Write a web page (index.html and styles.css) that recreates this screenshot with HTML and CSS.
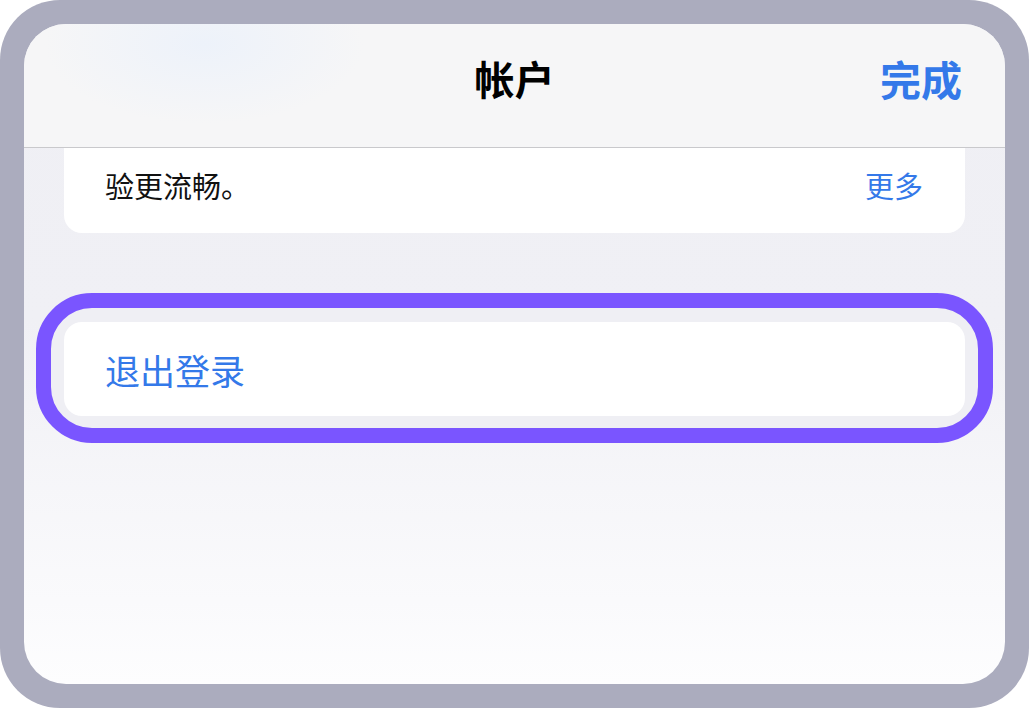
FILE: index.html
```html
<!DOCTYPE html>
<html>
  <head>
    <meta charset="UTF-8">
    <title>帐户</title>
    <link rel="stylesheet" href="styles.css">
  </head>
  <body>
    <div class="device">
      <div class="screen">
        <div class="header">
          <span></span>
          <h1 class="title">帐户</h1>
          <a class="done" href="#">完成</a>
        </div>
        <div class="content">
          <div class="card card-cut">
            <p class="card-text">验更流畅。</p>
            <a class="more" href="#">更多</a>
          </div>
          <div class="highlight">
            <div class="card card-logout">
              <a class="logout" href="#">退出登录</a>
            </div>
          </div>
        </div>
      </div>
    </div>
  </body>
</html>
```

FILE: styles.css
```css
body {
  margin: 0;
  background-color: #ffffff;
  font-family: "Noto Sans CJK SC", "Noto Sans", sans-serif;
}

a {
  text-decoration: none;
}

.device {
  width: 1029px;
  height: 708px;
  box-sizing: border-box;
  padding: 24px;
  background-color: #abacbe;
  border-radius: 60px;
}

.screen {
  height: 100%;
  display: flex;
  flex-direction: column;
  border-radius: 42px;
  overflow: hidden;
  background: linear-gradient(#efeff4 0%, #f0f0f5 45%, #fdfdfe 100%);
}

.header {
  height: 124px;
  box-sizing: border-box;
  padding: 0 43px 16px 43px;
  display: grid;
  grid-template-columns: 1fr auto 1fr;
  align-items: center;
  background: radial-gradient(ellipse 160px 80px at 180px 20px, #edf2fa, rgba(246, 246, 247, 0)), #f6f6f7;
  border-bottom: 1px solid #c9c9cc;
}

.title {
  margin: 0;
  font-size: 40px;
  font-weight: 700;
  color: #000000;
}

.done {
  justify-self: end;
  font-size: 41px;
  font-weight: 700;
  color: #3479e9;
}

.content {
  display: flex;
  flex-direction: column;
}

.card {
  display: flex;
  align-items: center;
  justify-content: space-between;
  background-color: #ffffff;
  border-radius: 18px;
  padding: 0 42px 0 41px;
}

.card-cut {
  height: 85px;
  margin: 0 40px;
  border-radius: 0 0 18px 18px;
}

.card-text {
  margin: 0 0 12px 0;
  font-size: 29px;
  color: #111111;
}

.more {
  margin-bottom: 12px;
  font-size: 29px;
  color: #3479e9;
}

.highlight {
  margin: 60px 12px 0 12px;
  border: 15px solid #7a55ff;
  border-radius: 56px;
  padding: 14px 13px 12px 13px;
  background-color: #efeff4;
}

.card-logout {
  height: 94px;
}

.logout {
  font-size: 35px;
  color: #3479e9;
}
```
